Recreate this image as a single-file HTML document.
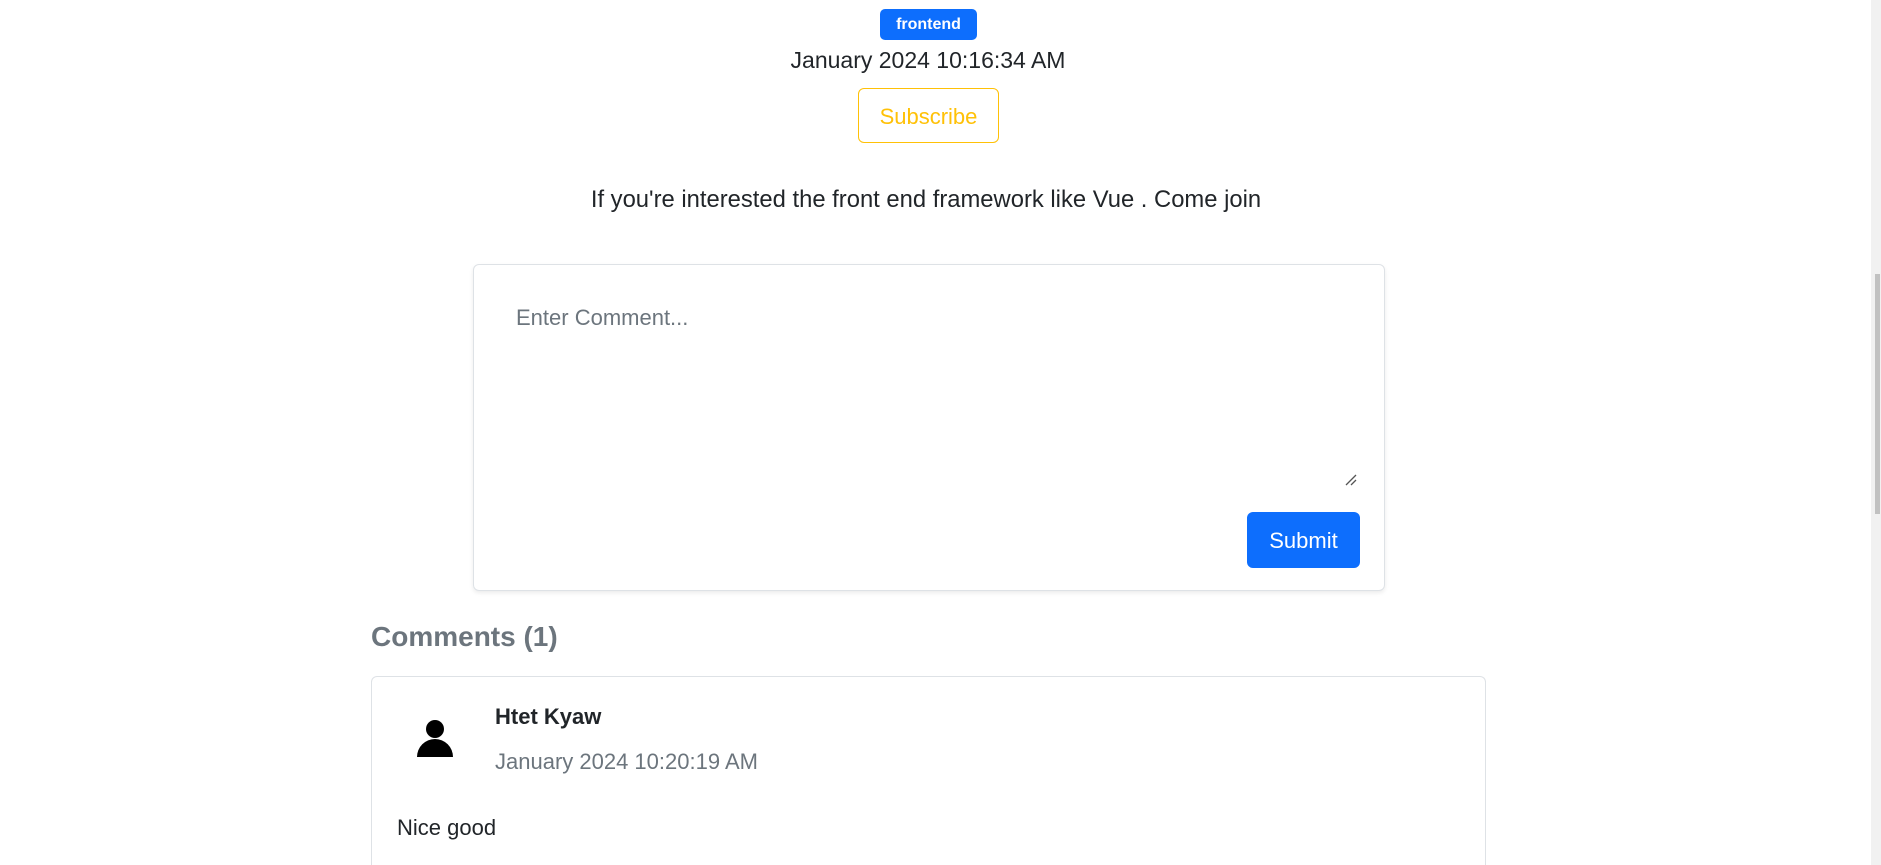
<!DOCTYPE html>
<html style="height:865px;overflow:hidden"><head><style>
body{margin:0;width:1881px;height:865px;overflow:hidden;background:#fff;font-family:"Segoe UI","Liberation Sans",sans-serif;color:#212529;position:relative}
.a{position:absolute}
</style></head><body>
<div class="a" style="left:880px;top:9px;width:97px;height:31px;background:#0d6efd;border-radius:5px;color:#fff;font-weight:bold;font-size:16px;line-height:31px;text-align:center">frontend</div>
<div class="a" style="left:0;width:1856px;top:44px;text-align:center;font-size:23px;line-height:32px">January 2024 10:16:34 AM</div>
<div class="a" style="left:858px;top:88px;width:139px;height:53px;border:1px solid #ffc107;border-radius:6px;color:#ffc107;font-size:22px;line-height:56px;text-align:center">Subscribe</div>
<div class="a" style="left:0;width:1852px;top:184px;text-align:center;font-size:23.8px;line-height:32px">If you're interested the front end framework like Vue . Come join</div>
<div class="a" style="left:473px;top:264px;width:910px;height:325px;border:1px solid #dee2e6;border-radius:6px;box-shadow:0 2px 4px rgba(0,0,0,.08)">
 <div class="a" style="left:42px;top:40px;font-size:22px;color:#6c757d">Enter Comment...</div>
 <svg class="a" style="left:870px;top:208px" width="14" height="14"><path d="M2 12L12 2M7 12L12 7" stroke="#555" stroke-width="1.3"/></svg>
 <div class="a" style="left:773px;top:247px;width:113px;height:56px;background:#0d6efd;border-radius:6px;color:#fff;font-size:22px;line-height:58px;text-align:center">Submit</div>
</div>
<div class="a" style="left:371px;top:621px;font-size:28px;font-weight:600;color:#6c757d">Comments (1)</div>
<div class="a" style="left:371px;top:676px;width:1113px;height:189px;border:1px solid #dee2e6;border-bottom:none;border-radius:6px 6px 0 0">
 <svg class="a" style="left:44px;top:42px" width="38" height="40" viewBox="0 0 38 40"><circle cx="19" cy="10" r="9"/><path d="M1 38A18 18 0 0 1 37 38Z"/></svg>
 <div class="a" style="left:123px;top:27px;font-size:22px;font-weight:600">Htet Kyaw</div>
 <div class="a" style="left:123px;top:72px;font-size:22px;color:#6c757d">January 2024 10:20:19 AM</div>
 <div class="a" style="left:25px;top:138px;font-size:22px">Nice good</div>
</div>
<div class="a" style="left:1871px;top:0;width:10px;height:865px;background:#f1f1f1"></div>
<div class="a" style="left:1875px;top:274px;width:5px;height:240px;background:#c1c1c1"></div>
</body></html>
